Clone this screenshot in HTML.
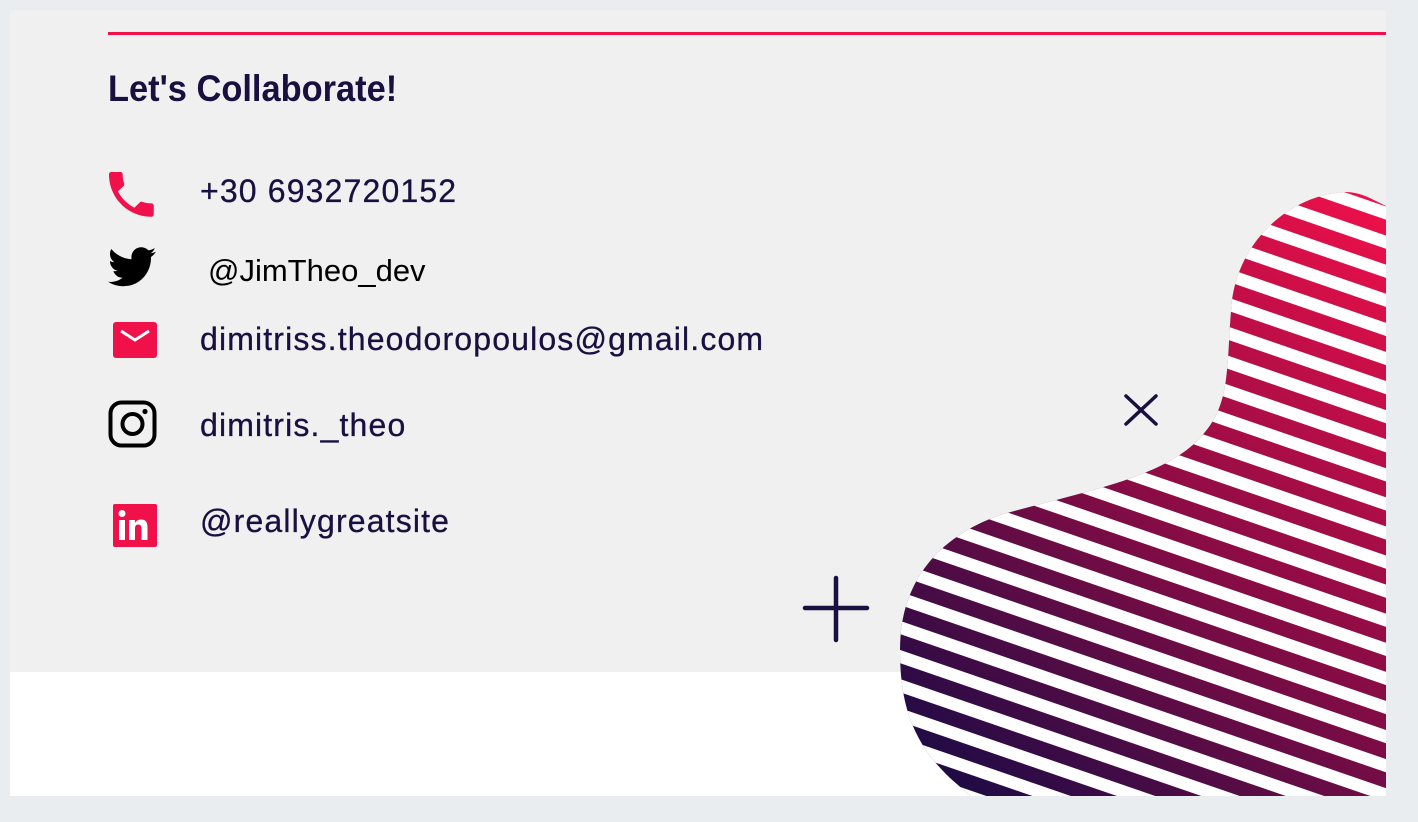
<!DOCTYPE html>
<html><head><meta charset="utf-8"><style>
html,body{margin:0;padding:0;}
body{width:1418px;height:822px;background:#e9edf0;position:relative;overflow:hidden;font-family:"Liberation Sans",sans-serif;}
.card{position:absolute;left:10px;top:10px;width:1376px;height:786px;background:#fff;overflow:hidden;}
.gray{position:absolute;left:0;top:0;width:1376px;height:662px;background:#f0f0f0;}
.line{position:absolute;left:98px;top:22px;width:1290px;height:3px;background:#f0104a;}
h1{position:absolute;left:98px;top:58px;margin:0;font-size:37px;font-weight:bold;color:#1a1040;transform:scaleX(0.93);transform-origin:left top;white-space:nowrap;}
.t{position:absolute;left:190px;font-size:32px;color:#1a1040;letter-spacing:1.15px;white-space:nowrap;-webkit-text-stroke:0.3px #1a1040;}
.ic{position:absolute;left:98px;}
</style></head><body>
<div class="card">
<div class="gray"></div>
<div class="line"></div>
<h1>Let's Collaborate!</h1>

<svg class="ic" style="top:162px" width="48" height="46" viewBox="3 3 18.5 18.5"><path fill="#f0104a" d="M6.6 10.8c1.4 2.8 3.8 5.1 6.6 6.6l2.2-2.2c.3-.3.7-.4 1-.2 1.1.4 2.3.6 3.6.6.6 0 1 .4 1 1V20c0 .6-.4 1-1 1C10.6 21 3 13.4 3 4c0-.6.4-1 1-1h3.5c.6 0 1 .4 1 1 0 1.3.2 2.5.6 3.6.1.3 0 .7-.2 1z"/></svg>
<div class="t" style="top:163px">+30 6932720152</div>

<svg class="ic" style="top:237px" width="48" height="40" viewBox="0 0 24 20"><path fill="#000" d="M24 2.4c-.9.4-1.8.6-2.8.8 1-.6 1.8-1.6 2.2-2.7-1 .6-2 1-3.1 1.2C19.3.7 18 .1 16.6.1c-2.7 0-4.9 2.2-4.9 4.9 0 .4 0 .8.1 1.1C7.7 5.9 4.1 4 1.7 1 1.2 1.7 1 2.6 1 3.5c0 1.7.9 3.2 2.2 4.1-.8 0-1.6-.2-2.2-.6v.1c0 2.4 1.7 4.4 3.9 4.8-.4.1-.8.2-1.3.2-.3 0-.6 0-.9-.1.6 2 2.4 3.4 4.6 3.4-1.7 1.3-3.8 2.1-6.1 2.1-.4 0-.8 0-1.2-.1 2.2 1.4 4.8 2.2 7.5 2.2 9.1 0 14-7.5 14-14v-.6c1-.7 1.8-1.6 2.5-2.6z"/></svg>
<div class="t" style="top:243px;left:198px;color:#000;letter-spacing:0;-webkit-text-stroke:0;font-size:31px">@JimTheo_dev</div>

<svg class="ic" style="top:312px;left:102px" width="46" height="36" viewBox="0 0 46 36"><rect x="1" y="0" width="44" height="36" rx="3" fill="#f0104a"/><path d="M9 9 L23 18 L37 9" stroke="#fff" stroke-width="3" fill="none"/></svg>
<div class="t" style="top:311px">dimitriss.theodoropoulos@gmail.com</div>

<svg class="ic" style="top:390px" width="50" height="48" viewBox="0 0 50 48"><rect x="2.5" y="2.5" width="44" height="43" rx="11" fill="none" stroke="#000" stroke-width="4"/><circle cx="24.5" cy="24" r="10" fill="none" stroke="#000" stroke-width="4"/><circle cx="37" cy="11.5" r="2.6" fill="#000"/></svg>
<div class="t" style="top:397px">dimitris._theo</div>

<svg class="ic" style="top:494px;left:103px" width="44" height="43" viewBox="0 0 44 43"><rect width="44" height="43" rx="2" fill="#f0104a"/><rect x="6" y="16" width="6" height="20" fill="#fff"/><circle cx="9" cy="9.5" r="3.5" fill="#fff"/><path d="M16 16h6v3c1.5-2.5 3.5-3.5 6-3.5 5 0 6.5 3 6.5 8V36h-6V25c0-3-1-4.5-3.3-4.5S22 22 22 25v11h-6z" fill="#fff"/></svg>
<div class="t" style="top:493px">@reallygreatsite</div>
</div>

<svg style="position:absolute;left:0;top:0" width="1418" height="822" viewBox="0 0 1418 822">
<defs>
<clipPath id="cp"><path d="M1345,192 C1290,195 1240,240 1232,300 C1226,360 1232,400 1205,432 C1170,478 1080,492 1000,515 C930,540 900,590 900,650 C900,700 910,740 950,778 L975,800 L1386,800 L1386,206 C1370,198 1360,192 1345,192 Z"/></clipPath>
<clipPath id="card"><rect x="10" y="10" width="1376" height="786"/></clipPath>
<linearGradient id="g" x1="900" y1="780" x2="1386" y2="200" gradientUnits="userSpaceOnUse"><stop offset="0" stop-color="#150b45"/><stop offset="0.5" stop-color="#8a0c45"/><stop offset="1" stop-color="#f0104a"/></linearGradient>
<pattern id="p" width="40" height="27.5" patternUnits="userSpaceOnUse" patternTransform="rotate(19) translate(0,4)"><rect x="0" y="15" width="40" height="12.5" fill="#fff"/></pattern>
</defs>
<g clip-path="url(#card)"><g clip-path="url(#cp)">
<rect x="880" y="180" width="520" height="630" fill="url(#g)"/>
<rect x="880" y="180" width="520" height="630" fill="url(#p)"/>
</g></g>
<path d="M836,578 V640 M805,608 H867" stroke="#1a1040" stroke-width="4.5" stroke-linecap="round"/>
<path d="M1126,396 L1156,424 M1156,396 L1126,424" stroke="#1a1040" stroke-width="3.5" stroke-linecap="round"/>
</svg>
</body></html>
